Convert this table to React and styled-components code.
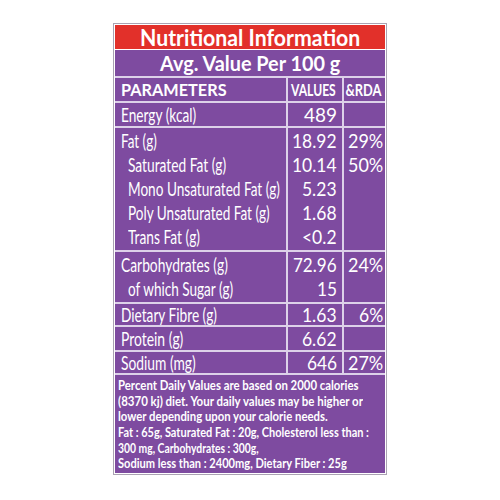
import { useLayoutEffect, useRef, useState } from 'react';
import styled, { createGlobalStyle } from 'styled-components';

const PURPLE = '#7e4ba0';
const RED = '#e2302a';
const RULE = '#ddd1e9';

const GlobalStyle = createGlobalStyle`
  html, body {
    margin: 0;
    padding: 0;
    background: #fff;
  }
  body {
    font-family: Lato, "Open Sans", sans-serif;
  }
`;

const Label = styled.div`
  box-sizing: border-box;
  width: 274px;
  margin: 23px 0 0 113px;
  padding: 1px;
  border: 1px solid #aaa2b2;
  background: #fff;
  color: #fff;
`;

const TitleBar = styled.div`
  height: 24px;
  background: ${RED};
  display: flex;
  align-items: center;
  justify-content: center;
  font-size: 23px;
  font-weight: 700;
  line-height: 24px;
  white-space: nowrap;
`;

const Table = styled.div`
  margin-top: 1px;
  display: grid;
  grid-template-columns: 171px 54px 41px;
  gap: 2px;
  background: ${RULE};
`;

const SubTitle = styled.div`
  grid-column: 1 / -1;
  height: 26px;
  background: ${PURPLE};
  display: flex;
  align-items: center;
  justify-content: center;
  font-size: 20.5px;
  font-weight: 700;
  white-space: nowrap;
`;

const HeadCell = styled.div`
  height: 23px;
  background: ${PURPLE};
  display: flex;
  align-items: center;
  justify-content: ${p => (p.$left ? 'flex-start' : 'center')};
  padding: ${p => (p.$left ? '0 0 0 6px' : '0 3px 0 0')};
  font-size: 17.5px;
  font-weight: 700;
  white-space: nowrap;
`;

const GroupCell = styled.div`
  box-sizing: border-box;
  height: ${p => p.$h}px;
  background: ${PURPLE};
  padding-right: ${p => p.$pr || 0}px;
`;

const Line = styled.div`
  height: ${p => p.$lh}px;
  display: flex;
  align-items: center;
  justify-content: ${p => (p.$right ? 'flex-end' : 'flex-start')};
  padding-left: ${p => p.$indent || 0}px;
  white-space: nowrap;
  font-size: ${p => (p.$num ? '19px' : '19.5px')};
`;

const Footer = styled.div`
  grid-column: 1 / -1;
  height: 98px;
  box-sizing: border-box;
  padding: 2px 0 0 3px;
  background: ${PURPLE};
  font-size: 13.5px;
  font-weight: 700;
`;

const FootLine = styled.div`
  height: 15.7px;
  display: flex;
  align-items: center;
  white-space: nowrap;
`;

const Squish = styled.span`
  display: inline-block;
  flex-shrink: 0;
  transform-origin: ${p => p.$origin};
`;

// squeezes a run of text to the width it has in the printed label
const Fit = ({ w, origin = 'left', children }) => {
  const ref = useRef(null);
  const [sx, setSx] = useState(1);
  useLayoutEffect(() => {
    const measure = () => {
      const el = ref.current;
      if (el && el.offsetWidth) setSx(w / el.offsetWidth);
    };
    measure();
    if (document.fonts) document.fonts.ready.then(measure);
  }, [w]);
  return (
    <Squish ref={ref} $origin={origin} style={{ transform: `scaleX(${sx})` }}>
      {children}
    </Squish>
  );
};

// [name, width, value, width, rda, width, indented]
const groups = [
  { h: 23, rows: [['Energy (kcal)', 75, '489', 33, '', 0]] },
  {
    h: 122,
    lh: 24,
    rows: [
      ['Fat (g)', 36, '18.92', 45, '29%', 35],
      ['Saturated Fat (g)', 98, '10.14', 45, '50%', 35, true],
      ['Mono Unsaturated Fat (g)', 152, '5.23', 35, '', 0, true],
      ['Poly Unsaturated Fat (g)', 142, '1.68', 35, '', 0, true],
      ['Trans Fat (g)', 72, '<0.2', 35, '', 0, true],
    ],
  },
  {
    h: 50,
    lh: 24,
    rows: [
      ['Carbohydrates (g)', 107, '72.96', 44, '24%', 35],
      ['of which Sugar (g)', 105, '15', 20, '', 0, true],
    ],
  },
  { h: 21, rows: [['Dietary Fibre (g)', 96, '1.63', 35, '6%', 24]] },
  { h: 23, rows: [['Protein (g)', 62, '6.62', 35, '', 0]] },
  { h: 21, rows: [['Sodium (mg)', 75, '646', 30, '27%', 35]] },
];

const notes = [
  ['Percent Daily Values are based on 2000 calories', 241],
  ['(8370 kj) diet. Your daily values may be higher or', 245],
  ['lower depending upon your calorie needs.', 210],
  ['Fat : 65g, Saturated Fat : 20g, Cholesterol less than :', 251],
  ['300 mg, Carbohydrates : 300g,', 141],
  ['Sodium less than : 2400mg, Dietary Fiber : 25g', 229],
];

const NutritionGroup = ({ h, lh, rows }) => {
  const lineH = lh || h;
  return (
    <>
      <GroupCell $h={h}>
        {rows.map(([name, w, , , , , sub]) => (
          <Line key={name} $lh={lineH} $indent={sub ? 13 : 6}>
            <Fit w={w}>{name}</Fit>
          </Line>
        ))}
      </GroupCell>
      <GroupCell $h={h} $pr={5}>
        {rows.map(([name, , value, vw]) => (
          <Line key={name} $lh={lineH} $right $num>
            <Fit w={vw} origin="right">{value}</Fit>
          </Line>
        ))}
      </GroupCell>
      <GroupCell $h={h} $pr={2}>
        {rows.map(([name, , , , rda, rw]) => (
          <Line key={name} $lh={lineH} $right $num>
            {rda && <Fit w={rw} origin="right">{rda}</Fit>}
          </Line>
        ))}
      </GroupCell>
    </>
  );
};

const App = () => {
  return (
    <>
      <GlobalStyle />
      <Label>
        <TitleBar>
          <Fit w={220} origin="center">Nutritional Information</Fit>
        </TitleBar>
        <Table>
          <SubTitle>
            <Fit w={180} origin="center">Avg. Value Per 100 g</Fit>
          </SubTitle>
          <HeadCell $left>
            <Fit w={106}>PARAMETERS</Fit>
          </HeadCell>
          <HeadCell>
            <Fit w={45} origin="center">VALUES</Fit>
          </HeadCell>
          <HeadCell>
            <Fit w={36} origin="center">&amp;RDA</Fit>
          </HeadCell>
          {groups.map(g => (
            <NutritionGroup key={g.rows[0][0]} {...g} />
          ))}
          <Footer>
            {notes.map(([text, w]) => (
              <FootLine key={text}>
                <Fit w={w}>{text}</Fit>
              </FootLine>
            ))}
          </Footer>
        </Table>
      </Label>
    </>
  );
};

export default App;
